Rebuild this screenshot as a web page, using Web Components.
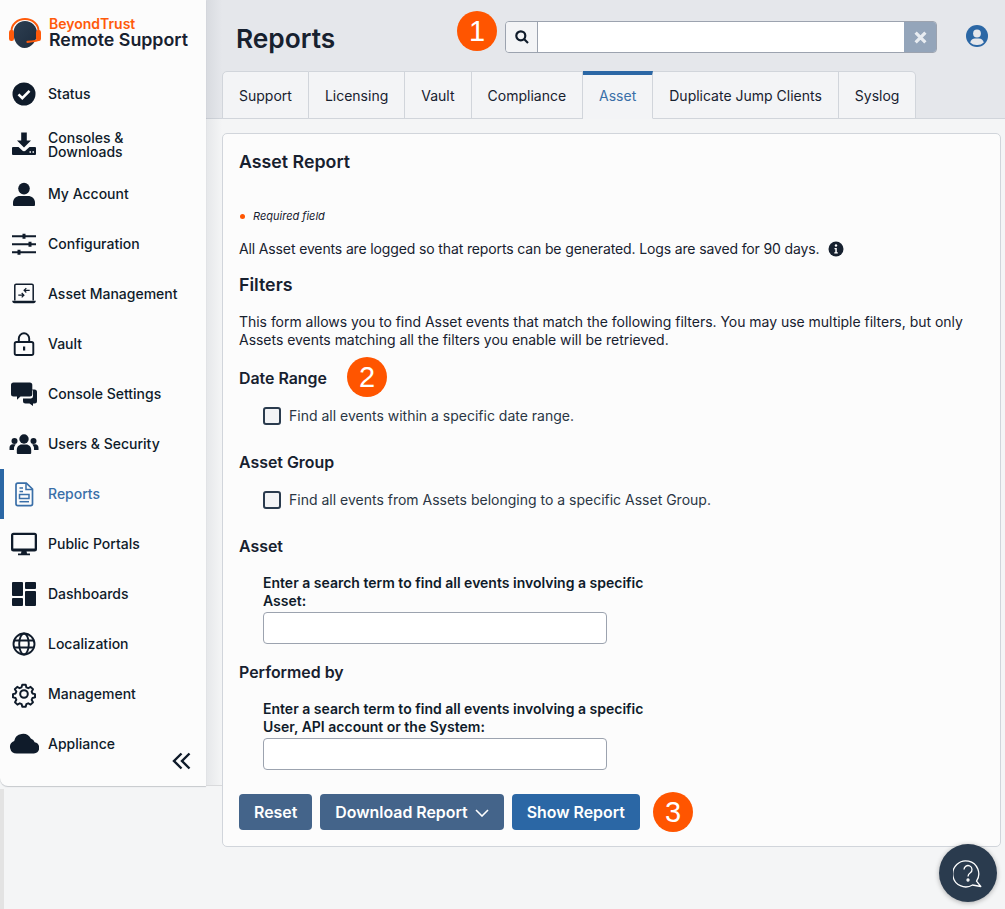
<!DOCTYPE html>
<html lang="en">
<head>
<meta charset="utf-8">
<title>Reports</title>
<style>
    html, body { margin: 0; padding: 0; height: 909px; overflow: hidden; }
    body { background: #f4f5f6; font-family: Inter, "Liberation Sans", sans-serif; color: #0f1b2a; }
    #app { display: flex; position: relative; height: 909px; }
</style>
</head>
<body>
<div id="app">
    <bt-sidebar>
        <bt-nav-item icon="status">Status</bt-nav-item>
        <bt-nav-item icon="download" style="--nudge:2px">Consoles &amp; Downloads</bt-nav-item>
        <bt-nav-item icon="user">My Account</bt-nav-item>
        <bt-nav-item icon="sliders">Configuration</bt-nav-item>
        <bt-nav-item icon="laptop">Asset Management</bt-nav-item>
        <bt-nav-item icon="lock">Vault</bt-nav-item>
        <bt-nav-item icon="comments">Console Settings</bt-nav-item>
        <bt-nav-item icon="users">Users &amp; Security</bt-nav-item>
        <bt-nav-item icon="report" active>Reports</bt-nav-item>
        <bt-nav-item icon="desktop">Public Portals</bt-nav-item>
        <bt-nav-item icon="dashboard">Dashboards</bt-nav-item>
        <bt-nav-item icon="globe">Localization</bt-nav-item>
        <bt-nav-item icon="gear">Management</bt-nav-item>
        <bt-nav-item icon="cloud">Appliance</bt-nav-item>
    </bt-sidebar>
    <bt-main>
        <bt-topbar slot="top" heading="Reports"></bt-topbar>
        <bt-tabs slot="top">
            <bt-tab>Support</bt-tab>
            <bt-tab>Licensing</bt-tab>
            <bt-tab>Vault</bt-tab>
            <bt-tab>Compliance</bt-tab>
            <bt-tab active>Asset</bt-tab>
            <bt-tab>Duplicate Jump Clients</bt-tab>
            <bt-tab>Syslog</bt-tab>
        </bt-tabs>
        <bt-report></bt-report>
    </bt-main>
    <bt-badge style="left:457px;top:11px">1</bt-badge>
    <bt-badge style="left:347px;top:357px">2</bt-badge>
    <bt-badge style="left:653px;top:792px">3</bt-badge>
    <bt-help></bt-help>
</div>

<script>
// paths for the sidebar, on a 30 box so the wide ones (users, cloud) can overflow the usual 24
const ICONS = {
    status: `<circle cx="15" cy="15" r="11.500" fill="currentColor"/><path d="M9.500 15.400l3.800 3.800 7.200-7.400" fill="none" stroke="#fff" stroke-width="2.600"/>`,
    download: `<path d="M12.200 3.500h5.600v8H22l-7 7-7-7h4.200z" fill="currentColor"/><path d="M3 19a1 1 0 0 1 1-1h5.500l3.300 3a3 3 0 0 0 4.400 0l3.300-3H26a1 1 0 0 1 1 1v6a1 1 0 0 1-1 1H4a1 1 0 0 1-1-1z" fill="currentColor"/><path d="M20.500 23h1.500M23.500 23h1.500" stroke="#fff" stroke-width="1.400"/>`,
    user: `<circle cx="15" cy="9.600" r="5.800" fill="currentColor"/><path d="M5 27a1 1 0 0 1-1-1v-2.200C4 19.600 7.300 17 11 17h8c3.700 0 7 2.600 7 6.800V26a1 1 0 0 1-1 1z" fill="currentColor"/>`,
    sliders: `<path d="M3 7.300h24M3 15.300h24M3 23.300h24" stroke="currentColor" stroke-width="1.900" fill="none"/><path d="M13.500 4.800h3v5h-3zM19.500 12.800h3v5h-3zM8.500 20.800h3v5h-3z" fill="currentColor"/>`,
    laptop: `<path d="M5.800 21.500V6.500A1.300 1.300 0 0 1 7.100 5.200h15.800a1.300 1.300 0 0 1 1.300 1.300v15" fill="none" stroke="currentColor" stroke-width="1.500"/><path d="M3.200 21.800h23.600c0 1.500-.8 2.400-2.300 2.400h-19c-1.500 0-2.300-.9-2.300-2.400z" fill="currentColor"/><path d="M9.300 16.200h5.500M12.700 14l2.200 2.200-2.200 2.200M20.700 11.300h-5.500M17.300 9.100l-2.200 2.200 2.200 2.200" fill="none" stroke="currentColor" stroke-width="1.200"/>`,
    lock: `<path d="M9.800 13.500V9.500a5.200 5.200 0 0 1 10.400 0v4" fill="none" stroke="currentColor" stroke-width="1.900"/><rect x="5.700" y="13" width="18.600" height="13" rx="1.800" fill="none" stroke="currentColor" stroke-width="1.900"/><rect x="14" y="17.500" width="2.200" height="4" fill="currentColor"/>`,
    comments: `<path d="M3.500 3.500h16.300a2.500 2.500 0 0 1 2.500 2.500v9a2.500 2.500 0 0 1-2.500 2.500h-9.300L7 20.700v-3.200H3.500A2.500 2.500 0 0 1 1 15V6a2.500 2.500 0 0 1 2.500-2.500z" fill="currentColor" transform="translate(1 0)"/><path d="M24 10.500h2.500A2.500 2.500 0 0 1 29 13v9a2.500 2.500 0 0 1-2.500 2.500H25V27l-3.500-2.500h-4A2.500 2.500 0 0 1 15 22v-2.500h8a2.500 2.500 0 0 0 2-2.500v-5z" fill="currentColor" transform="translate(-1 0)"/>`,
    users: `<circle cx="15" cy="10" r="4.700" fill="currentColor"/><circle cx="5.500" cy="12" r="3" fill="currentColor"/><circle cx="24.500" cy="12" r="3" fill="currentColor"/><path d="M7.800 24v-3.300c0-2.800 2.200-5.200 5-5.200h4.400c2.800 0 5 2.400 5 5.200V24a1 1 0 0 1-1 1H8.800a1 1 0 0 1-1-1z" fill="currentColor"/><path d="M.5 21v-2.300c0-2 1.400-3.400 3.200-3.400h3a7.500 7.500 0 0 0-1.800 5.700zM29.500 21v-2.300c0-2-1.400-3.400-3.200-3.400h-3a7.500 7.500 0 0 1 1.800 5.700z" fill="currentColor"/>`,
    report: `<path d="M7 6A1.800 1.800 0 0 1 8.800 4.200h8.500L23.500 10v14.800a1.800 1.800 0 0 1-1.800 1.800H8.800A1.800 1.800 0 0 1 7 24.800z" fill="none" stroke="currentColor" stroke-width="1.700"/><path d="M17 4.500V10.600h6M10.500 9h3.500M10.500 12.500h3.500" fill="none" stroke="currentColor" stroke-width="1.500"/><rect x="10.500" y="15.500" width="9.500" height="4" fill="none" stroke="currentColor" stroke-width="1.500"/><path d="M10.500 22.700h9.500" stroke="currentColor" stroke-width="1.500"/>`,
    desktop: `<path d="M4.500 3.800h21A2.500 2.500 0 0 1 28 6.300v13.700a2.500 2.500 0 0 1-2.500 2.500h-21A2.500 2.500 0 0 1 2 20V6.300a2.500 2.500 0 0 1 2.500-2.500z" fill="currentColor"/><rect x="4.300" y="6" width="21.400" height="13.500" fill="#fcfcfc"/><path d="M12.500 22h5l.5 2.500h3v1.800H9v-1.800h3z" fill="currentColor"/>`,
    dashboard: `<rect x="3" y="3" width="11" height="14" rx="1" fill="currentColor"/><rect x="16" y="3" width="11" height="7" rx="1" fill="currentColor"/><rect x="3" y="19" width="11" height="8" rx="1" fill="currentColor"/><rect x="16" y="12" width="11" height="15" rx="1" fill="currentColor"/>`,
    globe: `<g fill="none" stroke="currentColor" stroke-width="1.900"><circle cx="15" cy="15" r="10.500"/><ellipse cx="15" cy="15" rx="4.800" ry="10.500"/><path d="M4.800 11.500h20.400M4.800 18.500h20.400"/></g>`,
    gear: `<path d="M10 1.500h4l.7 3 2.100.9 2.700-1.600 2.800 2.800-1.600 2.700.9 2.100 3 .7v3.800l-3 .7-.9 2.100 1.600 2.700-2.800 2.800-2.700-1.600-2.100.9-.7 3h-4l-.7-3-2.100-.9-2.700 1.600-2.800-2.800 1.600-2.700-.9-2.100-3-.7v-3.800l3-.7.9-2.100L1.500 6.600l2.800-2.800L7 5.400l2.100-.9z" transform="translate(4.500 4.500) scale(.875)" fill="none" stroke="currentColor" stroke-width="2.200" stroke-linejoin="round"/><circle cx="15" cy="15" r="3.800" fill="none" stroke="currentColor" stroke-width="2"/>`,
    cloud: `<path d="M7 25.500A6.500 6.500 0 0 1 4.500 13 8.500 8.500 0 0 1 20.500 10.500a5.500 5.500 0 0 1 3.700 3.800A5.700 5.700 0 0 1 23.500 25.500z" fill="currentColor" transform="translate(.5 -1) scale(1.040 1)"/>`
};

class BtSidebar extends HTMLElement
{
    constructor()
    {
        super();
        this.attachShadow({mode: 'open'}).innerHTML = `
            <style>
                :host { display: flex; flex-direction: column; flex: none; width: 206px; height: 786px; position: relative; z-index: 2;
                        background: #fcfcfc; border-radius: 0 0 0 8px; box-shadow: 0 1px 1px rgba(30,40,60,.22); }
                :host::before { content: ""; position: absolute; left: 0; top: 789px; width: 4px; height: 120px; background: #e3e3e3; }
                :host::after { content: ""; position: absolute; left: 206px; top: 0; width: 16px; height: 786px;
                        background: linear-gradient(to right, rgba(40,50,70,.07), rgba(40,50,70,0)); border-bottom: 1px solid #d9dadc; box-sizing: border-box; }
                .logo { display: flex; gap: 8px; height: 69px; padding: 16px 0 0 9px; box-sizing: border-box; align-items: flex-start; }
                .logo svg { margin-top: 2px; flex: none; }
                .brand { display: flex; flex-direction: column; white-space: nowrap; }
                .b1 { color: #ff5a0a; font-size: 14px; font-weight: 600; line-height: 16px; }
                .b2 { color: #17212f; font-size: 17.800px; font-weight: 600; line-height: 16px; }
                .collapse { position: absolute; left: 172px; top: 752px; width: 19px; height: 18px; }
            </style>
            <div class="logo">
                <svg width="32" height="31" viewBox="0 0 32 31">
                    <defs><linearGradient id="head" x1="0" y1="0" x2="1" y2="1"><stop offset="0" stop-color="#2e3f52"/><stop offset="1" stop-color="#1d2c3d"/></linearGradient></defs>
                    <path d="M16 3c6.800 0 12 5 12 12 0 8-5.500 15-12.500 15C9 30 4.500 23 4.500 15 4.500 8 9.200 3 16 3z" fill="url(#head)"/>
                    <path d="M2.500 13a13.500 12 0 0 1 27 0" fill="none" stroke="#ff5a0a" stroke-width="2"/>
                    <rect x="0" y="12" width="5" height="11" rx="2.200" fill="#ff5a0a"/>
                    <rect x="27" y="12" width="5" height="11" rx="2.200" fill="#ff5a0a"/>
                    <path d="M30 21.500c-1 1.500-4.500 1.800-11.500 2.300" fill="none" stroke="#ff5a0a" stroke-width="2.200" stroke-linecap="round"/>
                </svg>
                <div class="brand"><span class="b1">BeyondTrust</span><span class="b2">Remote Support</span></div>
            </div>
            <slot></slot>
            <svg class="collapse" viewBox="0 0 19 18" fill="none" stroke="#0f1b2a" stroke-width="2.400"><path d="M9.500 1.500L2 9l7.500 7.500M17.500 1.500L10 9l7.500 7.500"/></svg>`;
    }
}
customElements.define('bt-sidebar', BtSidebar);

class BtNavItem extends HTMLElement
{
    constructor()
    {
        super();
        this.attachShadow({mode: 'open'}).innerHTML = `
            <style>
                :host { display: flex; align-items: center; height: 50px; box-sizing: border-box; padding-left: 9px; gap: 9px;
                        color: #0f1b2a; font-size: 14px; font-weight: 500; line-height: 14px; }
                :host([active]) { color: #3a6fa8; border-left: 4px solid #2b67a5; padding-left: 5px; }
                svg { flex: none; width: 30px; height: 30px; }
                span { display: block; width: 134px; margin-top: var(--nudge, 0); }
            </style>
            <svg viewBox="0 0 30 30">${ICONS[this.getAttribute('icon')] || ''}</svg>
            <span><slot></slot></span>`;
    }
}
customElements.define('bt-nav-item', BtNavItem);

class BtMain extends HTMLElement
{
    constructor()
    {
        super();
        this.attachShadow({mode: 'open'}).innerHTML = `
            <style>
                :host { display: flex; flex-direction: column; flex: 1; min-width: 0; }
                .top { background: #e5e7eb; border-bottom: 1px solid #d1d5db; height: 118px; padding-left: 16px; }
                .body { padding: 14px 4px 0 16px; }
            </style>
            <div class="top"><slot name="top"></slot></div>
            <div class="body"><slot></slot></div>`;
    }
}
customElements.define('bt-main', BtMain);

class BtTopbar extends HTMLElement
{
    constructor()
    {
        super();
        this.attachShadow({mode: 'open'}).innerHTML = `
            <style>
                :host { display: flex; height: 71px; box-sizing: border-box; padding: 21px 0 0 14px; }
                h1 { margin: 0; width: 269px; font-size: 26.300px; font-weight: 600; line-height: 36px; color: #17212f; white-space: nowrap; }
                .search { display: flex; width: 432px; height: 32px; box-sizing: border-box; border: 1px solid #9ca3af; border-radius: 4px; overflow: hidden; }
                .mag { display: flex; align-items: center; justify-content: center; width: 31px; background: #f3f4f6; border-right: 1px solid #9ca3af; }
                .field { flex: 1; background: #fff; }
                .clear { display: flex; align-items: center; justify-content: center; width: 33px; background: #94a5ba; margin: -1px -1px -1px 0; }
                .me { margin: 4px 0 0 29px; }
            </style>
            <h1>${this.getAttribute('heading')}</h1>
            <div class="search">
                <div class="mag"><svg width="14" height="14" viewBox="0 0 14 14" fill="none" stroke="#0f1b2a" stroke-width="2.200"><circle cx="5.800" cy="5.800" r="4.500"/><path d="M9 9l4 4"/></svg></div>
                <div class="field"></div>
                <div class="clear"><svg width="13" height="13" viewBox="0 0 12 12" stroke="#e8ecf1" stroke-width="3"><path d="M1.500 1.500l9 9M10.500 1.500l-9 9"/></svg></div>
            </div>
            <svg class="me" width="22" height="22" viewBox="0 0 22 22"><circle cx="11" cy="11" r="11" fill="#2b67a5"/><circle cx="11" cy="8.500" r="3.900" fill="#e5e7eb"/><path d="M4.200 17.400c.6-2.600 2.600-3.900 4.800-3.900h4c2.200 0 4.200 1.300 4.800 3.900A9 9 0 0 1 11 20a9 9 0 0 1-6.800-2.600z" fill="#e5e7eb"/></svg>`;
    }
}
customElements.define('bt-topbar', BtTopbar);

class BtTabs extends HTMLElement
{
    constructor()
    {
        super();
        this.attachShadow({mode: 'open'}).innerHTML = `
            <style>
                :host { display: flex; height: 48px; }
                ::slotted(bt-tab:first-child) { border-radius: 5px 0 0 0; border-left: 1px solid #d1d5db; }
                ::slotted(bt-tab:last-child) { border-radius: 0 5px 0 0; }
            </style>
            <slot></slot>`;
    }
}
customElements.define('bt-tabs', BtTabs);

class BtTab extends HTMLElement
{
    constructor()
    {
        super();
        this.attachShadow({mode: 'open'}).innerHTML = `
            <style>
                :host { display: flex; align-items: center; box-sizing: border-box; height: 48px; padding: 0 16px; background: #f3f4f6;
                        border-top: 1px solid #d1d5db; border-right: 1px solid #d1d5db; border-bottom: 1px solid #d1d5db;
                        font-size: 14px; color: #17212f; white-space: nowrap; }
                :host([active]) { color: #3a6fa8; border-top: 4px solid #2b67a5; border-bottom: 1px solid #f3f4f6; padding-bottom: 3px; }
            </style>
            <slot></slot>`;
    }
}
customElements.define('bt-tab', BtTab);

class BtBadge extends HTMLElement
{
    constructor()
    {
        super();
        this.attachShadow({mode: 'open'}).innerHTML = `
            <style>
                :host { display: flex; align-items: center; justify-content: center; position: absolute; z-index: 3; width: 40px; height: 40px;
                        border-radius: 50%; background: #ff5500; color: #fff; font-family: "Liberation Sans", sans-serif; font-size: 29px; line-height: 40px; }
            </style>
            <slot></slot>`;
    }
}
customElements.define('bt-badge', BtBadge);

class BtCheck extends HTMLElement
{
    constructor()
    {
        super();
        this.attachShadow({mode: 'open'}).innerHTML = `
            <style>
                :host { display: flex; align-items: center; gap: 8px; margin-left: 24px; font-size: 14px; line-height: 18px; color: #2a3644; }
                i { display: block; flex: none; width: 14px; height: 14px; border: 2px solid #2a3b4e; border-radius: 3px; background: #f3f4f6; margin-top: -1px; }
            </style>
            <i></i><span><slot></slot></span>`;
    }
}
customElements.define('bt-check', BtCheck);

class BtField extends HTMLElement
{
    constructor()
    {
        super();
        this.attachShadow({mode: 'open'}).innerHTML = `
            <style>
                :host { display: block; margin-left: 24px; }
                label { display: block; width: 400px; font-size: 14px; font-weight: 600; line-height: 18px; color: #0f1b2a; margin-bottom: 2px; }
                div { box-sizing: border-box; width: 344px; height: 32px; background: #fff; border: 1px solid #9ca3af; border-radius: 4px; }
            </style>
            <label><slot></slot></label><div></div>`;
    }
}
customElements.define('bt-field', BtField);

class BtButton extends HTMLElement
{
    constructor()
    {
        super();
        this.attachShadow({mode: 'open'}).innerHTML = `
            <style>
                :host { display: flex; align-items: center; gap: 7px; height: 36px; box-sizing: border-box; padding: 1px 15px 0; border-radius: 4px; background: #44648a;
                        color: #fff; font-size: 15.900px; font-weight: 600; white-space: nowrap; }
                :host([primary]) { background: #2b67a5; }
            </style>
            <slot></slot>`;
    }
}
customElements.define('bt-button', BtButton);

class BtReport extends HTMLElement
{
    constructor()
    {
        super();
        this.attachShadow({mode: 'open'}).innerHTML = `
            <style>
                :host { display: block; box-sizing: border-box; width: 779px; height: 714px; padding: 17px 16px 0; background: #fcfcfc;
                        border: 1px solid #d1d5db; border-radius: 5px; color: #17212f; font-size: 14px; line-height: 18px; }
                h2 { margin: 0; font-size: 17.800px; font-weight: 600; line-height: 22px; }
                h3 { margin: 0 0 -1px; padding-top: 1px; font-size: 15.900px; font-weight: 600; line-height: 20px; }
                p { margin: 0; }
                .req { display: flex; align-items: center; gap: 8px; margin-top: 36px; font-size: 11px; font-style: italic; line-height: 14px; }
                .req b { width: 5px; height: 5px; margin-left: 1px; border-radius: 50%; background: #ff5500; }
                .info { display: flex; align-items: center; gap: 9px; margin-top: 17px; letter-spacing: -.135px; }
                .filters { margin-top: 16px; }
                .desc { margin-top: 17px; letter-spacing: -.03px; }
                .dr { margin-top: 19px; }
                .gap { margin-top: 28px; }
                bt-check { margin-top: 19px; margin-bottom: -1px; }
                bt-field { margin-top: 18px; }
                .actions { display: flex; gap: 8px; margin-top: 24px; }
            </style>
            <h2>Asset Report</h2>
            <div class="req"><b></b>Required field</div>
            <div class="info">
                <span>All Asset events are logged so that reports can be generated. Logs are saved for 90 days.</span>
                <svg width="16" height="16" viewBox="0 0 16 16"><circle cx="8" cy="8" r="7.500" fill="#17212f"/><circle cx="8" cy="4.500" r="1.200" fill="#fff"/><path d="M6.500 7h2.300v4.200h1v1.300H6.300v-1.300h1V8.300h-.8z" fill="#fff"/></svg>
            </div>
            <h2 class="filters">Filters</h2>
            <p class="desc">This form allows you to find Asset events that match the following filters. You may use multiple filters, but only Assets events matching all the filters you enable will be retrieved.</p>
            <h3 class="dr">Date Range</h3>
            <bt-check>Find all events within a specific date range.</bt-check>
            <h3 class="gap">Asset Group</h3>
            <bt-check>Find all events from Assets belonging to a specific Asset Group.</bt-check>
            <h3 class="gap">Asset</h3>
            <bt-field>Enter a search term to find all events involving a specific Asset:</bt-field>
            <h3 class="gap" style="margin-top:18px">Performed by</h3>
            <bt-field>Enter a search term to find all events involving a specific User, API account or the System:</bt-field>
            <div class="actions">
                <bt-button>Reset</bt-button>
                <bt-button>Download Report <svg width="14" height="8" viewBox="0 0 14 8" fill="none" stroke="#fff" stroke-width="1.600"><path d="M1 1l6 6 6-6"/></svg></bt-button>
                <bt-button primary>Show Report</bt-button>
            </div>`;
    }
}
customElements.define('bt-report', BtReport);

class BtHelp extends HTMLElement
{
    constructor()
    {
        super();
        this.attachShadow({mode: 'open'}).innerHTML = `
            <style>
                :host { display: flex; align-items: center; justify-content: center; position: absolute; z-index: 3; left: 939px; top: 844px; width: 58px; height: 58px;
                        border-radius: 50%; background: #2a3b4e; box-shadow: 0 1px 5px rgba(0,0,0,.3); }
            </style>
            <svg width="30" height="30" viewBox="0 0 30 30" fill="none" stroke="#fff" stroke-width="1.300">
                <path d="M23.500 23.200A13 13 0 1 0 19.500 27l8.300 1.500z" stroke-linejoin="round"/>
                <path d="M11 11.500a4 4 0 1 1 6.300 3.300c-1.500 1-2.300 1.800-2.300 3.700"/>
                <circle cx="15" cy="22" r="1"/>
            </svg>`;
    }
}
customElements.define('bt-help', BtHelp);
</script>
</body>
</html>
